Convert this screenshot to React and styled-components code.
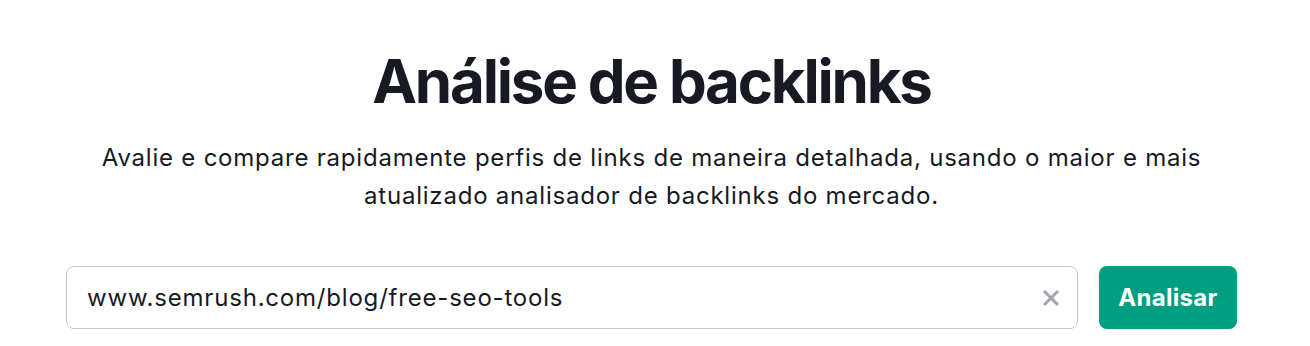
import React from 'react';
import styled, { createGlobalStyle } from 'styled-components';

const GlobalStyle = createGlobalStyle`
  html, body {
    margin: 0;
    padding: 0;
    background: #ffffff;
  }
  body {
    font-family: Inter, "Noto Sans", Arial, sans-serif;
    color: #171a22;
  }
`;

const Page = styled.main`
  display: flex;
  flex-direction: column;
  align-items: center;
  padding: 45px 73px 0 66px;
`;

const Title = styled.h1`
  margin: 0;
  font-size: 60px;
  line-height: 72px;
  font-weight: 700;
  letter-spacing: -2.2px;
  text-align: center;
`;

const Lead = styled.p`
  margin: 22px 0 0;
  font-size: 24px;
  line-height: 38px;
  font-weight: 400;
  letter-spacing: 0.78px;
  text-align: center;
`;

const SearchForm = styled.form`
  display: flex;
  align-self: stretch;
  gap: 21px;
  margin-top: 51px;
`;

const Field = styled.div`
  flex: 1;
  display: flex;
  align-items: center;
  height: 63px;
  box-sizing: border-box;
  padding: 0 14px 0 20px;
  border: 1px solid #c4c7cf;
  border-radius: 8px;
  background: #fff;
`;

const Input = styled.input`
  flex: 1;
  border: 0;
  outline: none;
  padding: 0;
  background: transparent;
  font-family: inherit;
  font-size: 24px;
  letter-spacing: 0.8px;
  color: #171a22;
`;

const ClearButton = styled.button`
  display: flex;
  align-items: center;
  justify-content: center;
  width: 24px;
  height: 24px;
  padding: 0;
  border: 0;
  background: transparent;
  cursor: pointer;
`;

const SubmitButton = styled.button`
  width: 138px;
  height: 63px;
  border: 0;
  border-radius: 8px;
  background: #009f81;
  color: #fff;
  font-family: inherit;
  font-size: 24px;
  font-weight: 700;
  letter-spacing: 0.3px;
  cursor: pointer;
`;

const App = () => {
  return (
    <>
      <GlobalStyle />
      <Page>
        <Title>Análise de backlinks</Title>
        <Lead>
          Avalie e compare rapidamente perfis de links de maneira detalhada, usando o maior e mais
          <br />
          atualizado analisador de backlinks do mercado.
        </Lead>
        <SearchForm onSubmit={(e) => e.preventDefault()}>
          <Field>
            <Input defaultValue="www.semrush.com/blog/free-seo-tools" />
            <ClearButton type="button" aria-label="Limpar">
              <svg width="18" height="18" viewBox="0 0 18 18">
                <path d="M2 2 L16 16 M16 2 L2 16" stroke="#a3a4ad" strokeWidth="3" />
              </svg>
            </ClearButton>
          </Field>
          <SubmitButton type="submit">Analisar</SubmitButton>
        </SearchForm>
      </Page>
    </>
  );
};

export default App;
